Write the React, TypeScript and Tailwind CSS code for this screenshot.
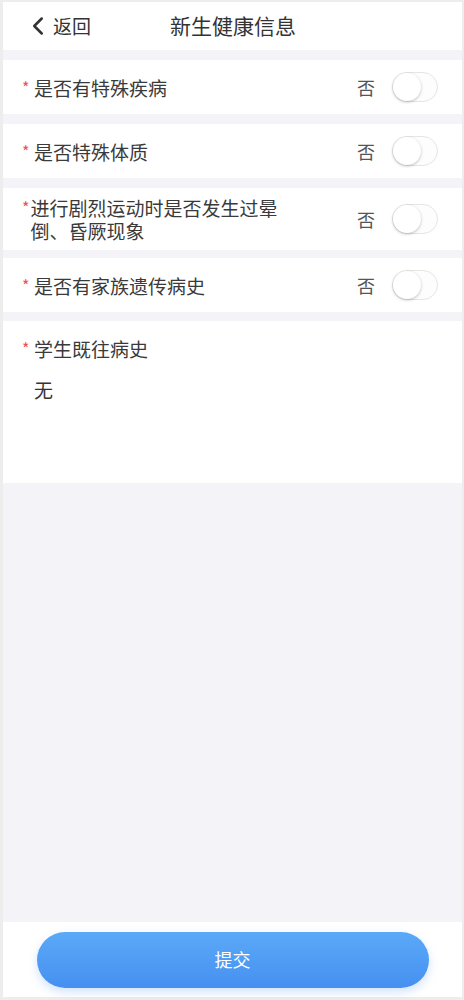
import { ChevronLeft } from "lucide-react";

const font = { fontFamily: '"Noto Sans CJK SC", "Noto Sans", sans-serif' };

function Toggle() {
  return (
    <div className="relative h-[30px] w-[46px] rounded-full border border-[#e5e5e5] bg-[#fdfdfd]">
      <div className="absolute left-0 top-0 h-[28px] w-[28px] rounded-full bg-white shadow-[0_1px_3px_rgba(0,0,0,0.25)]" />
    </div>
  );
}

function Label({ text }: { text: string }) {
  return (
    <div className="flex items-start">
      <span className="mt-[1px] w-[12px] text-[16px] leading-[20px] text-[#f05050]">*</span>
      <span className="text-[19px] leading-[23px] text-[#3a3a3a]">{text}</span>
    </div>
  );
}

function SwitchRow({ text, tall }: { text: string; tall?: boolean }) {
  return (
    <div
      className={`flex items-center justify-between bg-white pl-[19px] pr-[24px] ${
        tall ? "h-[62px]" : "h-[54px]"
      }`}
    >
      <div className="w-[262px]">
        <Label text={text} />
      </div>
      <div className="flex items-center gap-[17px]">
        <span className="text-[18px] text-[#555]">否</span>
        <Toggle />
      </div>
    </div>
  );
}

export default function App() {
  return (
    <div
      style={font}
      className="flex h-[1000px] w-[464px] flex-col border-t-2 border-r-2 border-b-[3px] border-l-[3px] border-[#ededed] bg-[#f4f4f8]"
    >
      <header className="relative flex h-[48px] shrink-0 items-center bg-white">
        <div className="flex items-center pl-[20px] text-[#333]">
          <ChevronLeft className="h-[30px] w-[30px]" strokeWidth={2} />
          <span className="text-[19px]">返回</span>
        </div>
        <h1 className="absolute left-[167px] text-[21px] text-[#333]">新生健康信息</h1>
      </header>

      <div className="mt-[10px] flex flex-col gap-[10px]">
        <SwitchRow text="是否有特殊疾病" />
        <SwitchRow text="是否特殊体质" />
        <SwitchRow text="进行剧烈运动时是否发生过晕倒、昏厥现象" tall />
      </div>
      <div className="mt-[8px]">
        <SwitchRow text="是否有家族遗传病史" />
      </div>

      <div className="mt-[9px] h-[162px] bg-white pl-[19px] pt-[16px]">
        <Label text="学生既往病史" />
        <p className="mt-[16px] pl-[12px] text-[19px] text-[#333]">无</p>
      </div>

      <div className="flex-1" />

      <div className="flex h-[75px] shrink-0 items-center justify-center bg-white">
        <button className="h-[56px] w-[392px] rounded-full bg-gradient-to-b from-[#5ba9f8] to-[#4590f0] text-[18px] text-white shadow-[0_4px_10px_rgba(70,145,240,0.25)]">
          提交
        </button>
      </div>
    </div>
  );
}
